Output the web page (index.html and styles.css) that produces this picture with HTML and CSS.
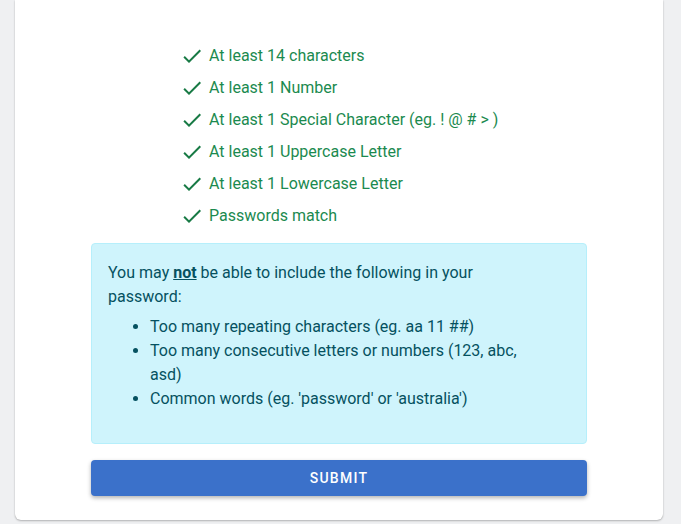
FILE: index.html
```html
<!DOCTYPE html>
<html>
<head>
<meta charset="utf-8">
<link rel="stylesheet" href="styles.css">
</head>
<body>
<div class="card">
  <ul class="checks">
    <li><svg class="ic" viewBox="0 0 24 24"><path d="M9 16.17L4.83 12l-1.42 1.41L9 19 21 7l-1.41-1.41z"/></svg>At least 14 characters</li>
    <li><svg class="ic" viewBox="0 0 24 24"><path d="M9 16.17L4.83 12l-1.42 1.41L9 19 21 7l-1.41-1.41z"/></svg>At least 1 Number</li>
    <li><svg class="ic" viewBox="0 0 24 24"><path d="M9 16.17L4.83 12l-1.42 1.41L9 19 21 7l-1.41-1.41z"/></svg>At least 1 Special Character (eg. ! @ # &gt; )</li>
    <li><svg class="ic" viewBox="0 0 24 24"><path d="M9 16.17L4.83 12l-1.42 1.41L9 19 21 7l-1.41-1.41z"/></svg>At least 1 Uppercase Letter</li>
    <li><svg class="ic" viewBox="0 0 24 24"><path d="M9 16.17L4.83 12l-1.42 1.41L9 19 21 7l-1.41-1.41z"/></svg>At least 1 Lowercase Letter</li>
    <li><svg class="ic" viewBox="0 0 24 24"><path d="M9 16.17L4.83 12l-1.42 1.41L9 19 21 7l-1.41-1.41z"/></svg>Passwords match</li>
  </ul>
  <div class="alert">
    <div class="alert-inner">
      <p class="lead-text">You may <b><u>not</u></b> be able to include the following in your password:</p>
      <ul class="bullets">
        <li>Too many repeating characters (eg. aa 11 ##)</li>
        <li>Too many consecutive letters or numbers (123, abc, asd)</li>
        <li>Common words (eg. 'password' or 'australia')</li>
      </ul>
    </div>
  </div>
  <button class="submit">Submit</button>
</div>
</body>
</html>
```
FILE: styles.css
```css
html, body {
  margin: 0;
  padding: 0;
}
body {
  background: #eff0f2;
  font-family: Roboto, "Liberation Sans", sans-serif;
  font-size: 16px;
  width: 681px;
  height: 524px;
  overflow: hidden;
}
.card {
  margin-left: 15px;
  width: 648px;
  box-sizing: border-box;
  background: #fff;
  border-radius: 0 0 6px 6px;
  box-shadow: 0 1px 2px rgba(0,0,0,0.25), 0 0 1px rgba(0,0,0,0.15);
  padding: 40px 76px 24px 76px;
}
.checks {
  list-style: none;
  margin: 0 0 11px 0;
  padding: 0 0 0 89px;
  color: #1b8a4f;
}
.checks li {
  display: flex;
  align-items: center;
  height: 32px;
  line-height: 32px;
}
.ic {
  width: 24px;
  height: 24px;
  fill: #187a45;
  margin-right: 5px;
  flex: none;
}
.alert {
  background: #cff4fc;
  border: 1px solid #b6effb;
  border-radius: 4px;
  color: #055160;
  padding: 17px 16px 16px 16px;
  line-height: 24px;
}
.alert-inner {
  width: 424px;
}
.lead-text {
  margin: 0 0 6px 0;
}
.bullets {
  margin: 0 0 16px 0;
  padding-left: 42px;
}
.submit {
  display: block;
  width: 100%;
  margin-top: 16px;
  height: 36px;
  border: none;
  border-radius: 4px;
  background: #3b71ca;
  color: #fff;
  font-family: Roboto, "Liberation Sans", sans-serif;
  font-size: 14px;
  font-weight: 500;
  letter-spacing: 1.25px;
  text-transform: uppercase;
  box-shadow: 0 2px 4px rgba(0,0,0,0.3);
}
```
